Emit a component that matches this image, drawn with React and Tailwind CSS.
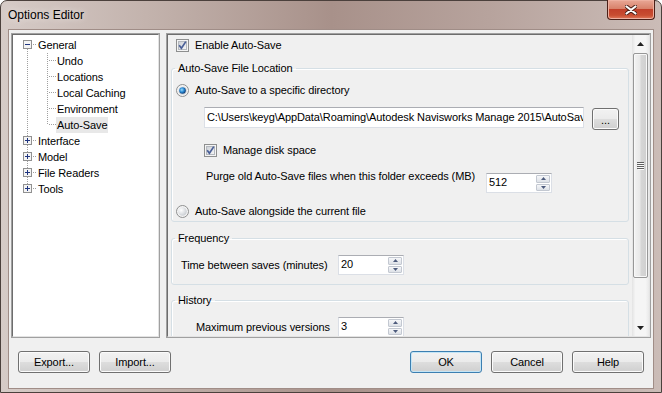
import React from "react";

const PATH = "C:\\Users\\keyg\\AppData\\Roaming\\Autodesk Navisworks Manage 2015\\AutoSave";

function CheckBox() {
  return (
    <svg width="13" height="13" viewBox="0 0 13 13" className="shrink-0">
      <defs>
        <linearGradient id="cbIn" x1="0" y1="0" x2="1" y2="1">
          <stop offset="0" stopColor="#cbcfd5" />
          <stop offset="1" stopColor="#f7f7f7" />
        </linearGradient>
      </defs>
      <rect x="0.5" y="0.5" width="12" height="12" fill="#f4f4f4" stroke="#8e8f8f" />
      <rect x="2.5" y="2.5" width="8" height="8" fill="url(#cbIn)" stroke="#b4b8be" />
      <path d="M3.2 6.2 L5.4 9.2 L9.8 2.6" fill="none" stroke="#4a5f97" strokeWidth="1.7" />
    </svg>
  );
}

function Radio({ on }) {
  return (
    <svg width="13" height="13" viewBox="0 0 13 13" className="shrink-0">
      <defs>
        <radialGradient id="rOff" cx="0.35" cy="0.35" r="0.7">
          <stop offset="0" stopColor="#ffffff" />
          <stop offset="1" stopColor="#c9cdd2" />
        </radialGradient>
        <radialGradient id="rOn" cx="0.4" cy="0.4" r="0.6">
          <stop offset="0" stopColor="#9fdcfb" />
          <stop offset="0.55" stopColor="#2a8ad4" />
          <stop offset="1" stopColor="#0b3e7a" />
        </radialGradient>
      </defs>
      <circle cx="6.5" cy="6.5" r="6" fill="#f4f4f4" stroke="#8e8f8f" />
      <circle cx="6.5" cy="6.5" r="4.3" fill="url(#rOff)" />
      {on && <circle cx="6.5" cy="6.5" r="3.3" fill="url(#rOn)" />}
    </svg>
  );
}

function Spinner({ value }) {
  return (
    <div className="flex h-[20px] w-[66px] shrink-0 border border-[#dbdfe6] border-t-[#abadb3] bg-white">
      <span className="flex-1 pl-[2px] leading-[16px]">{value}</span>
      <div className="flex w-[16px] flex-col gap-[1px] p-[1px]">
        {[0, 1].map((i) => (
          <div
            key={i}
            className="flex flex-1 items-center justify-center rounded-[1px] border border-[#c3c8d1] bg-[linear-gradient(#f6f7f9,#dde1e7)]"
          >
            <svg width="5" height="3" viewBox="0 0 5 3">
              <path d={i === 0 ? "M0 3 L2.5 0 L5 3 Z" : "M0 0 L2.5 3 L5 0 Z"} fill="#4d5b7c" />
            </svg>
          </div>
        ))}
      </div>
    </div>
  );
}

function Btn({ children, def, className = "" }) {
  return (
    <button
      className={
        "flex h-[22px] items-center justify-center rounded-[3px] border bg-[linear-gradient(#f2f2f2,#ebebeb_48%,#dddddd_52%,#cfcfcf)] text-[11px] text-black " +
        (def
          ? "border-[#3c7fb1] shadow-[inset_0_0_0_1px_#c4e5f6] "
          : "border-[#707070] shadow-[inset_0_0_0_1px_#fbfbfb] ") +
        className
      }
    >
      {children}
    </button>
  );
}

const DOT = { stroke: "#a0a0a0", strokeDasharray: "1 1", shapeRendering: "crispEdges" };

function ExpandBox({ open }) {
  return (
    <g shapeRendering="crispEdges">
      <rect x="10.5" y="3.5" width="8" height="8" fill="#f4f4f4" stroke="#919191" />
      <line x1="12" y1="7.5" x2="17" y2="7.5" stroke="#1f3580" />
      {!open && <line x1="14.5" y1="5" x2="14.5" y2="10" stroke="#1f3580" />}
    </g>
  );
}

function RootRow({ label, first, last, open }) {
  return (
    <div className="flex h-[16px] items-center">
      <svg width="24" height="16" viewBox="0 0 24 16" className="shrink-0">
        {!first && <line x1="14.5" y1="0" x2="14.5" y2="4" style={DOT} />}
        {!last && <line x1="14.5" y1="12" x2="14.5" y2="16" style={DOT} />}
        <line x1="20" y1="7.5" x2="24" y2="7.5" style={DOT} />
        <ExpandBox open={open} />
      </svg>
      <span className="px-[1px] leading-[16px]">{label}</span>
    </div>
  );
}

function ChildRow({ label, last, selected }) {
  return (
    <div className="flex h-[16px] items-center">
      <svg width="43" height="16" viewBox="0 0 43 16" className="shrink-0">
        <line x1="14.5" y1="0" x2="14.5" y2="16" style={DOT} />
        <line x1="34.5" y1="0" x2="34.5" y2={last ? 8 : 16} style={DOT} />
        <line x1="36" y1="7.5" x2="43" y2="7.5" style={DOT} />
      </svg>
      <span className={"px-[1px] leading-[16px] " + (selected ? "bg-[#e8e8e8]" : "")}>{label}</span>
    </div>
  );
}

function Group({ title, className = "", children }) {
  return (
    <fieldset
      className={
        "ml-[3px] w-[458px] rounded-[3px] border border-[#d5dfe5] shadow-[inset_1px_1px_0_#fff] " + className
      }
    >
      <legend className="ml-[3px] px-[3px] leading-[16px]">{title}</legend>
      {children}
    </fieldset>
  );
}

export default function App() {
  return (
    <div className="h-[393px] w-[662px] overflow-hidden bg-white font-['Liberation_Sans',Arial,sans-serif] text-[11px] tracking-[-0.1px] text-black">
      <div className="flex h-full flex-col rounded-t-[7px] border border-[#4b403c] bg-[linear-gradient(90deg,#d6cbc7_0%,#c3b3ad_22%,#a8918a_50%,#b7a39d_74%,#cbbcb7_100%)] px-[7px] pb-[3px]">
        {/* TITLE BAR */}
        <div className="flex h-[28px] shrink-0 items-start justify-between">
          <span className="pt-[7px] text-[12px] leading-[15px] tracking-normal [text-shadow:0_0_6px_#f4eeec]">
            Options Editor
          </span>
          <div className="-mr-[1px] -mt-[1px] flex h-[20px] w-[48px] items-center justify-center rounded-b-[4px] border border-t-0 border-[#4a1f17] bg-[linear-gradient(#e9a796,#d8826b_45%,#c2402a_50%,#c84d31_80%,#e07a5c)] shadow-[inset_0_0_0_1px_#eeb0a0]">
            <svg width="12" height="10" viewBox="0 0 12 10">
              <path d="M1.5 1.5 L10.5 8.5 M10.5 1.5 L1.5 8.5" stroke="#4a1f17" strokeWidth="4" strokeLinecap="round" />
              <path d="M1.5 1.5 L10.5 8.5 M10.5 1.5 L1.5 8.5" stroke="#ffffff" strokeWidth="2.2" strokeLinecap="round" />
            </svg>
          </div>
        </div>

        {/* CLIENT AREA */}
        <div className="flex flex-1 flex-col border border-[#a08d87] bg-[#f0f0f0] px-[2px] pt-[3px]">
          <div className="flex h-[305px] gap-[6px]">
            {/* TREE */}
            <div className="w-[149px] shrink-0 border border-[#a0a0a0]">
              <div className="h-full border border-[#6d6d6d] border-b-[#e3e3e3] border-r-[#e3e3e3] bg-white pt-[2px]">
                <RootRow label="General" first open />
                <ChildRow label="Undo" />
                <ChildRow label="Locations" />
                <ChildRow label="Local Caching" />
                <ChildRow label="Environment" />
                <ChildRow label="Auto-Save" last selected />
                <RootRow label="Interface" />
                <RootRow label="Model" />
                <RootRow label="File Readers" />
                <RootRow label="Tools" last />
              </div>
            </div>

            {/* OPTIONS PANEL */}
            <div className="flex-1 border border-[#a0a0a0]">
              <div className="flex h-full border border-[#6d6d6d] border-b-[#e3e3e3] border-r-[#e3e3e3]">
                <div className="flex-1 overflow-hidden">
                  <div className="mt-[4px] flex h-[13px] items-center gap-[6px] pl-[8px]">
                    <CheckBox />
                    <span className="leading-[13px]">Enable Auto-Save</span>
                  </div>

                  <Group title="Auto-Save File Location" className="mt-[8px] pb-[2px]">
                    <div className="mt-[6px] flex h-[16px] items-center gap-[6px] pl-[4px]">
                      <Radio on />
                      <span>Auto-Save to a specific directory</span>
                    </div>
                    <div className="mt-[9px] flex items-start gap-[8px] pl-[32px]">
                      <div className="h-[21px] w-[380px] overflow-hidden whitespace-nowrap border border-[#dbdfe6] border-t-[#abadb3] bg-white px-[2px] leading-[18px]">
                        {PATH}
                      </div>
                      <Btn className="mt-[1px] w-[27px] pt-[3px]">...</Btn>
                    </div>
                    <div className="mt-[12px] flex h-[16px] items-center gap-[6px] pl-[32px]">
                      <CheckBox />
                      <span>Manage disk space</span>
                    </div>
                    <div className="mt-[10px] flex items-start">
                      <span className="w-[314px] shrink-0 pl-[34px] leading-[16px]">
                        Purge old Auto-Save files when this folder exceeds (MB)
                      </span>
                      <div className="mt-[5px]">
                        <Spinner value="512" />
                      </div>
                    </div>
                    <div className="mt-[10px] flex h-[16px] items-center gap-[6px] pl-[4px]">
                      <Radio />
                      <span>Auto-Save alongside the current file</span>
                    </div>
                  </Group>

                  <Group title="Frequency" className="mt-[8px] pb-[9px]">
                    <div className="mt-[9px] flex h-[20px] items-center">
                      <span className="w-[166px] shrink-0 pl-[9px]">Time between saves (minutes)</span>
                      <Spinner value="20" />
                    </div>
                  </Group>

                  <Group title="History" className="mt-[7px] pb-[9px]">
                    <div className="mt-[9px] flex h-[20px] items-center">
                      <span className="w-[166px] shrink-0 pl-[24px]">Maximum previous versions</span>
                      <Spinner value="3" />
                    </div>
                  </Group>
                </div>

                {/* SCROLLBAR */}
                <div className="flex w-[17px] shrink-0 flex-col bg-[linear-gradient(90deg,#e3e3e3,#f5f5f5_20%,#f5f5f5_80%,#e9e9e9)]">
                  <div className="flex h-[17px] items-center justify-center">
                    <svg width="7" height="4" viewBox="0 0 7 4">
                      <path d="M0 4 L3.5 0 L7 4 Z" fill="#202020" />
                    </svg>
                  </div>
                  <div className="mx-[1px] mt-[1px] flex h-[225px] items-center justify-center rounded-[2px] border border-[#979797] bg-[linear-gradient(90deg,#f3f3f3,#e8e8e8_45%,#d6d6d6_55%,#cfcfcf)] shadow-[inset_0_0_0_1px_#f8f8f8]">
                    <svg width="7" height="8" viewBox="0 0 7 8" shapeRendering="crispEdges">
                      {[0, 2, 4, 6].map((y) => (
                        <g key={y}>
                          <line x1="0" y1={y + 0.5} x2="7" y2={y + 0.5} stroke="#5f5f5f" />
                          <line x1="1" y1={y + 1.5} x2="7" y2={y + 1.5} stroke="#fbfbfb" />
                        </g>
                      ))}
                    </svg>
                  </div>
                  <div className="flex-1" />
                  <div className="flex h-[17px] items-center justify-center">
                    <svg width="7" height="4" viewBox="0 0 7 4">
                      <path d="M0 0 L3.5 4 L7 0 Z" fill="#202020" />
                    </svg>
                  </div>
                </div>
              </div>
            </div>
          </div>

          {/* BUTTON ROW */}
          <div className="mt-[13px] flex justify-between px-[7px]">
            <div className="flex gap-[9px]">
              <Btn className="w-[72px]">Export...</Btn>
              <Btn className="w-[72px]">Import...</Btn>
            </div>
            <div className="flex gap-[9px]">
              <Btn def className="w-[72px]">OK</Btn>
              <Btn className="w-[72px]">Cancel</Btn>
              <Btn className="w-[72px]">Help</Btn>
            </div>
          </div>
        </div>
      </div>
    </div>
  );
}
